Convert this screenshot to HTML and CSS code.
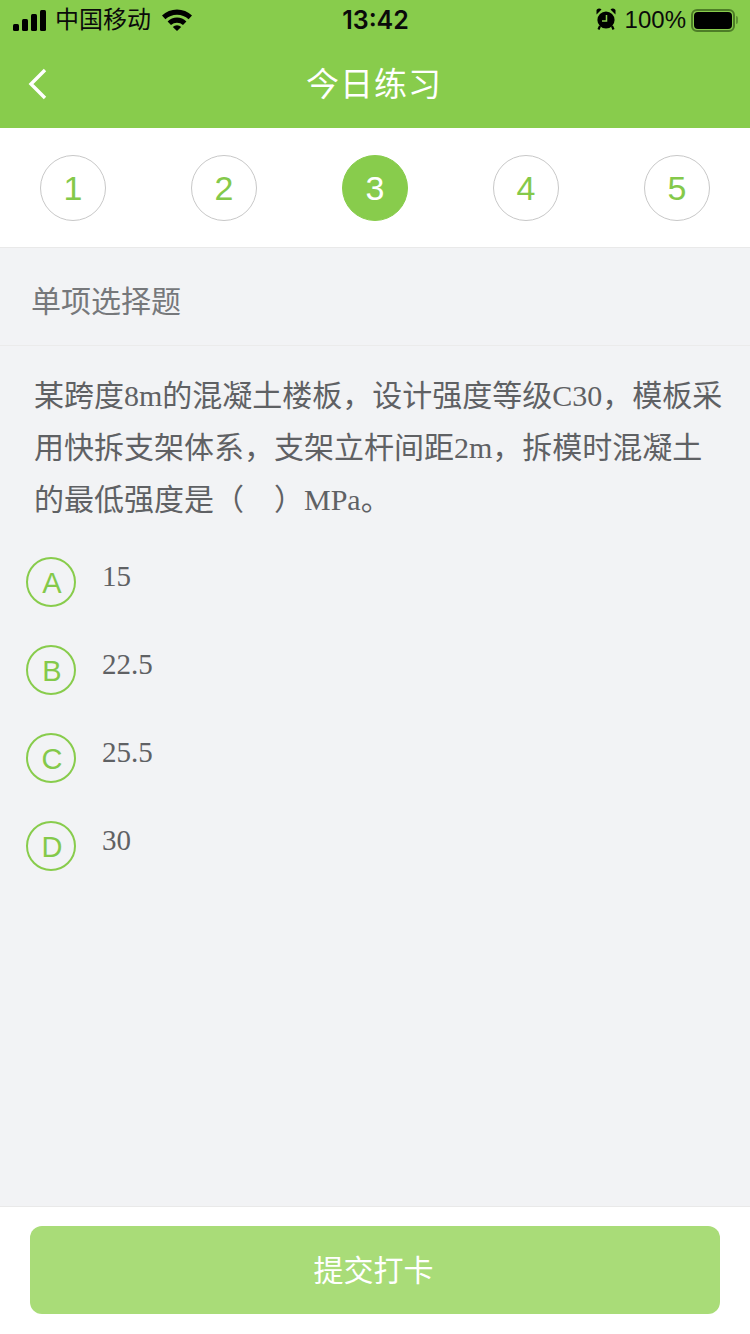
FILE: index.html
```html
<!DOCTYPE html>
<html lang="zh-CN">
<head>
  <meta charset="UTF-8">
  <meta name="viewport" content="width=device-width, initial-scale=1.0">
  <title>今日练习</title>
  <link rel="stylesheet" href="styles.css">
</head>
<body>
  <div class="page">
    <header class="top">
      <div class="status">
        <div class="status-left">
          <svg class="signal" width="34" height="21" viewBox="0 0 34 21">
            <rect x="0" y="14" width="6" height="7" rx="1.5"/>
            <rect x="9" y="9" width="6" height="12" rx="1.5"/>
            <rect x="18" y="4" width="6" height="17" rx="1.5"/>
            <rect x="27" y="0" width="6" height="21" rx="1.5"/>
          </svg>
          <span class="carrier">中国移动</span>
          <svg class="wifi" width="30" height="22" viewBox="0 0 30 22">
            <path d="M0 6.5 A21.5 21.5 0 0 1 30 6.5 L26.6 10.2 A17 17 0 0 0 3.4 10.2 Z"/>
            <path d="M5.6 12.4 A13.5 13.5 0 0 1 24.4 12.4 L21 16 A9 9 0 0 0 9 16 Z"/>
            <path d="M10.8 18 A6 6 0 0 1 19.2 18 L15 22 Z"/>
          </svg>
        </div>
        <div class="clock">13:42</div>
        <div class="status-right">
          <svg class="alarm" width="20" height="22" viewBox="0 0 20 22">
            <circle cx="10" cy="12" r="8.6"/>
            <path d="M0.5 6.5 L5.5 1.5 A3 3 0 0 0 0.5 2 Z M19.5 6.5 L14.5 1.5 A3 3 0 0 1 19.5 2 Z"/>
            <path d="M4 18 L2.5 21.5 M16 18 L17.5 21.5" stroke="#000" stroke-width="2.2"/>
            <path d="M10.5 7 V13 H6" fill="none" stroke="#88cc4c" stroke-width="1.5"/>
          </svg>
          <span class="percent">100%</span>
          <div class="battery"><div class="battery-fill"></div></div>
          <div class="battery-cap"></div>
        </div>
      </div>
      <div class="navbar">
        <svg class="back" width="20" height="32" viewBox="0 0 20 32">
          <path d="M17 2 L3 16 L17 30" fill="none" stroke="#fff" stroke-width="3.4"/>
        </svg>
        <h1 class="title">今日练习</h1>
      </div>
    </header>

    <div class="steps">
      <div class="step">1</div>
      <div class="step">2</div>
      <div class="step active">3</div>
      <div class="step">4</div>
      <div class="step">5</div>
    </div>

    <main class="content">
      <div class="q-type">单项选择题</div>
      <p class="question">某跨度8m的混凝土楼板，设计强度等级C30，模板采用快拆支架体系，支架立杆间距2m，拆模时混凝土的最低强度是（&nbsp;&nbsp;&nbsp;&nbsp;）MPa。</p>
      <ul class="options">
        <li class="option"><span class="letter">A</span><span class="answer">15</span></li>
        <li class="option"><span class="letter">B</span><span class="answer">22.5</span></li>
        <li class="option"><span class="letter">C</span><span class="answer">25.5</span></li>
        <li class="option"><span class="letter">D</span><span class="answer">30</span></li>
      </ul>
    </main>

    <footer class="bottom">
      <button class="submit" type="button">提交打卡</button>
    </footer>
  </div>
</body>
</html>
```

FILE: styles.css
```css
* {
  box-sizing: border-box;
}
html, body {
  margin: 0;
  height: 100%;
}
body {
  font-family: "Liberation Sans", "Noto Sans CJK SC", sans-serif;
  background: #f2f3f5;
}
.page {
  width: 750px;
  height: 1334px;
  display: flex;
  flex-direction: column;
  overflow: hidden;
}
.top {
  height: 128px;
  background: #88cc4c;
  flex-shrink: 0;
}
.status {
  height: 40px;
  display: grid;
  grid-template-columns: 1fr auto 1fr;
  align-items: center;
  padding: 0 12px 0 13px;
  color: #0a0a0a;
}
.status-left {
  display: flex;
  align-items: center;
}
.signal {
  fill: #000;
}
.carrier {
  font-size: 24px;
  margin-left: 8px;
  line-height: 40px;
}
.wifi {
  fill: #000;
  margin-left: 11px;
}
.clock {
  font-family: "Inter", "Liberation Sans", sans-serif;
  font-size: 25px;
  font-weight: 600;
}
.status-right {
  display: flex;
  align-items: center;
  justify-content: flex-end;
}
.alarm {
  fill: #000;
  margin-top: -2px;
}
.percent {
  font-size: 24px;
  margin-left: 9px;
  margin-right: 5px;
}
.battery {
  width: 44px;
  height: 23px;
  border: 2px solid #4d7d27;
  border-radius: 6px;
  padding: 1px;
}
.battery-fill {
  height: 100%;
  background: #000;
  border-radius: 4px;
}
.battery-cap {
  width: 2px;
  height: 8px;
  margin-left: 1px;
  background: #5f9434;
  border-radius: 0 2px 2px 0;
}
.navbar {
  height: 88px;
  display: flex;
  align-items: center;
  justify-content: center;
  position: relative;
}
.back {
  position: absolute;
  left: 28px;
  top: 28px;
}
.title {
  margin: 0 2px 0 0;
  font-size: 33px;
  font-weight: 400;
  letter-spacing: 1px;
  color: #fff;
  padding-bottom: 4px;
}
.steps {
  height: 120px;
  flex-shrink: 0;
  background: #fff;
  border-bottom: 1px solid #e9e9e9;
  display: flex;
  justify-content: space-between;
  align-items: center;
  padding: 1px 40px 0;
}
.step {
  width: 66px;
  height: 66px;
  border-radius: 50%;
  border: 1px solid #c8c8c8;
  color: #84c94a;
  font-size: 34px;
  display: flex;
  align-items: center;
  justify-content: center;
}
.step.active {
  background: #88cc4c;
  border-color: #88cc4c;
  color: #fff;
}
.content {
  flex: 1;
  min-height: 0;
}
.q-type {
  height: 98px;
  padding: 4px 31px 0;
  border-bottom: 1px solid #ebebeb;
  display: flex;
  align-items: center;
  font-size: 30px;
  color: #76787b;
}
.question {
  margin: 24px 25px 0 34px;
  font-family: "Liberation Serif", "Noto Sans CJK SC", serif;
  font-size: 30px;
  line-height: 52px;
  color: #5f6164;
}
.options {
  list-style: none;
  margin: 31px 0 0;
  padding: 0 0 0 26px;
  display: flex;
  flex-direction: column;
  gap: 38px;
}
.option {
  display: flex;
  height: 50px;
}
.letter {
  width: 50px;
  height: 50px;
  border-radius: 50%;
  border: 2px solid #88cc4c;
  color: #84c94a;
  font-size: 29px;
  padding: 2px 0 0 2px;
  display: flex;
  align-items: center;
  justify-content: center;
  flex-shrink: 0;
}
.answer {
  font-family: "Liberation Serif", serif;
  font-size: 29px;
  line-height: 36px;
  color: #5f6164;
  margin-left: 26px;
  margin-top: 1px;
}
.bottom {
  height: 128px;
  flex-shrink: 0;
  background: #fff;
  border-top: 1px solid #e9e9e9;
  padding: 19px 30px 0;
}
.submit {
  display: block;
  width: 100%;
  height: 88px;
  border: none;
  border-radius: 12px;
  background: #a9dc78;
  color: #fff;
  font-family: "Noto Sans CJK SC", sans-serif;
  font-size: 30px;
  padding: 0 3px 4px 0;
}
```
